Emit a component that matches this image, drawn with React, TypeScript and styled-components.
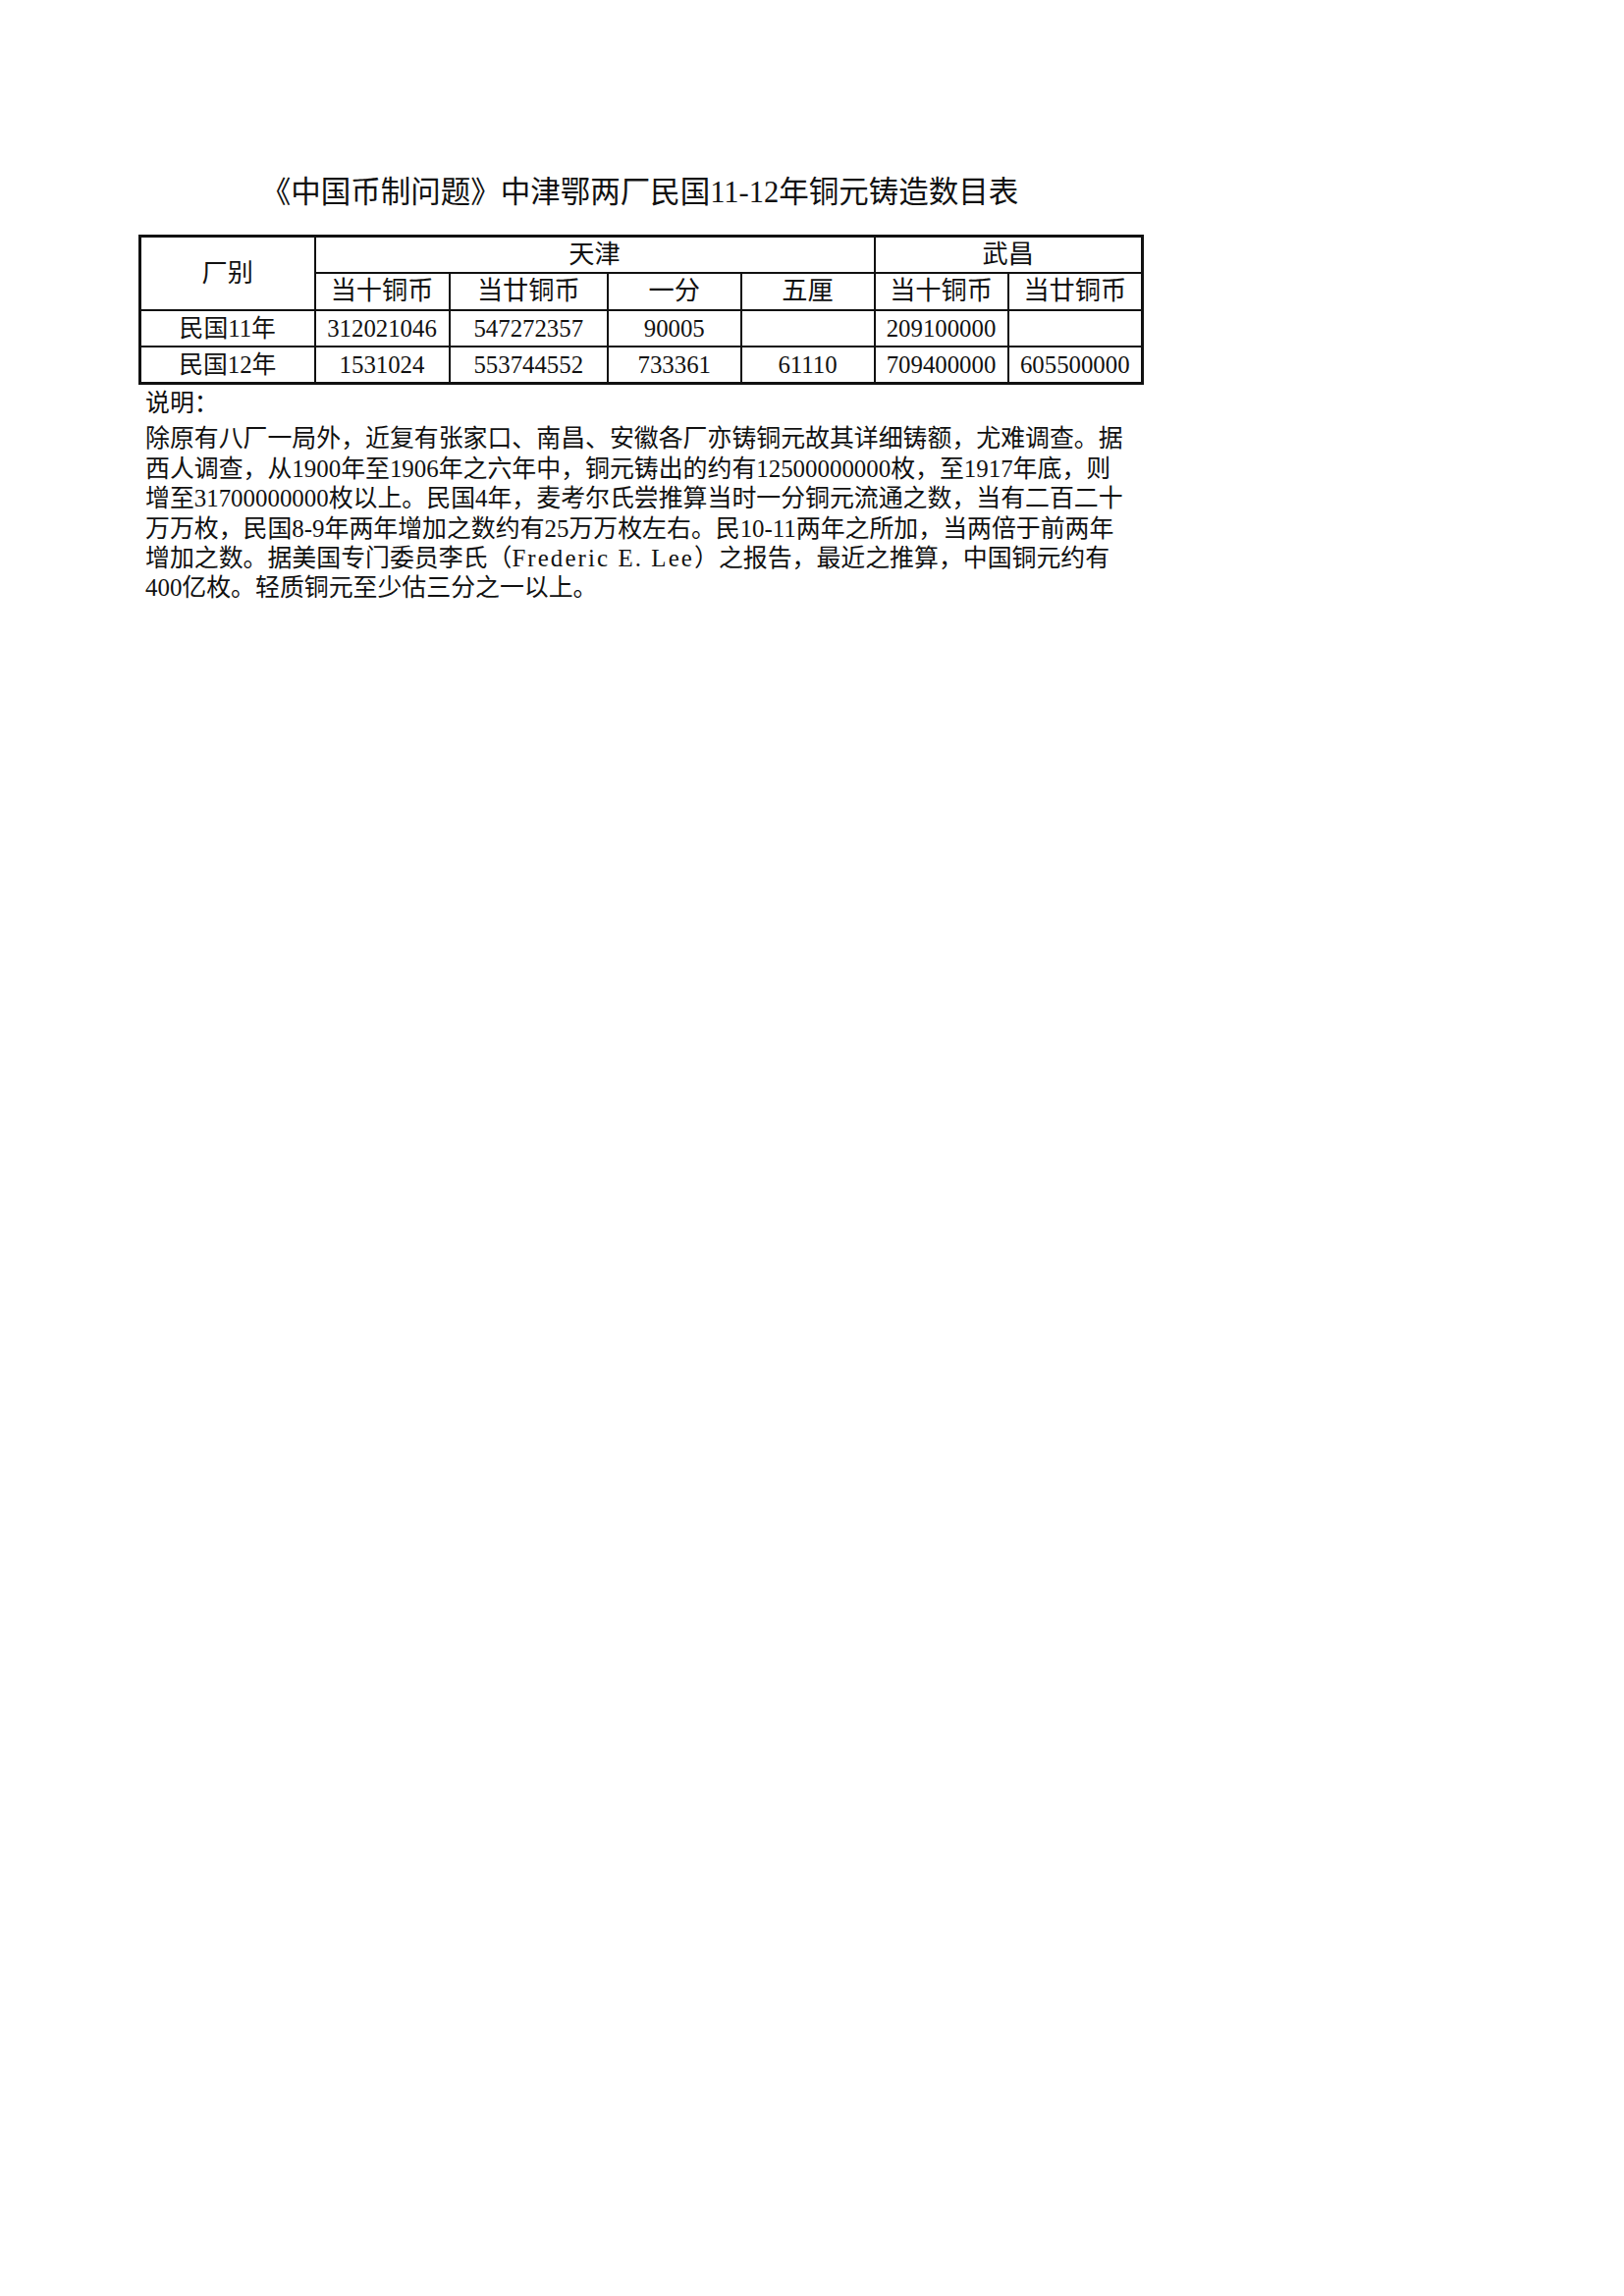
import React from 'react'
import styled, {createGlobalStyle} from 'styled-components'

const GlobalStyle = createGlobalStyle`
  html, body {
    margin: 0;
    padding: 0;
    background: #fff;
  }
  body {
    font-family: "Liberation Serif", "Noto Sans CJK SC", serif;
    color: #111;
  }
`

const Page = styled.div`
  padding: 176px 0 0 141px;
  min-height: 2339px;
  box-sizing: border-box;
`

const Sheet = styled.div`
  width: 1021px;
`

const Title = styled.h1`
  margin: 0 0 23px;
  height: 40px;
  line-height: 40px;
  font-size: 30.5px;
  font-weight: 400;
  text-align: center;
  white-space: nowrap;
`

const Grid = styled.table`
  width: 1021px;
  table-layout: fixed;
  border-collapse: collapse;
  border: 3px solid #111;
`

const Row = styled.tr`
  height: 37.6px;
`

const Cell = styled.td<{$head?: boolean}>`
  padding: 0;
  border: 2px solid #111;
  font-size: ${(p) => (p.$head ? '26.2px' : '24.8px')};
  line-height: 33px;
  text-align: center;
  white-space: nowrap;
  overflow: hidden;
`

const NoteLabel = styled.div`
  height: 38px;
  line-height: 38px;
  padding-left: 7px;
  font-size: 24.9px;
`

const Note = styled.div`
  padding: 2px 0 0 7px;
  font-size: 24.9px;
`

const NoteLine = styled.div`
  height: 30.4px;
  line-height: 30.4px;
  white-space: nowrap;
`

const Latin = styled.span`
  letter-spacing: 2.1px;
`

const widths = [178, 137, 161.5, 135.5, 136, 136, 137]

const subHeads = ['当十铜币', '当廿铜币', '一分', '五厘', '当十铜币', '当廿铜币']

const rows = [
  ['民国11年', '312021046', '547272357', '90005', '', '209100000', ''],
  ['民国12年', '1531024', '553744552', '733361', '61110', '709400000', '605500000'],
]

const lines: React.ReactNode[] = [
  '除原有八厂一局外，近复有张家口、南昌、安徽各厂亦铸铜元故其详细铸额，尤难调查。据',
  '西人调查，从1900年至1906年之六年中，铜元铸出的约有12500000000枚，至1917年底，则',
  '增至31700000000枚以上。民国4年，麦考尔氏尝推算当时一分铜元流通之数，当有二百二十',
  '万万枚，民国8-9年两年增加之数约有25万万枚左右。民10-11两年之所加，当两倍于前两年',
  <>增加之数。据美国专门委员李氏（<Latin>Frederic E. Lee</Latin>）之报告，最近之推算，中国铜元约有</>,
  '400亿枚。轻质铜元至少估三分之一以上。',
]

export default function App() {
  return (
    <>
      <GlobalStyle />
      <Page>
        <Sheet>
          <Title>《中国币制问题》中津鄂两厂民国11-12年铜元铸造数目表</Title>
          <Grid>
            <colgroup>
              {widths.map((w, i) => (
                <col key={i} style={{width: w}} />
              ))}
            </colgroup>
            <tbody>
              <Row>
                <Cell $head rowSpan={2}>厂别</Cell>
                <Cell $head colSpan={4}>天津</Cell>
                <Cell $head colSpan={2}>武昌</Cell>
              </Row>
              <Row>
                {subHeads.map((h, i) => (
                  <Cell $head key={i}>{h}</Cell>
                ))}
              </Row>
              {rows.map((r) => (
                <Row key={r[0]}>
                  {r.map((v, i) => (
                    <Cell key={i}>{v}</Cell>
                  ))}
                </Row>
              ))}
            </tbody>
          </Grid>
          <NoteLabel>说明：</NoteLabel>
          <Note>
            {lines.map((l, i) => (
              <NoteLine key={i}>{l}</NoteLine>
            ))}
          </Note>
        </Sheet>
      </Page>
    </>
  )
}
